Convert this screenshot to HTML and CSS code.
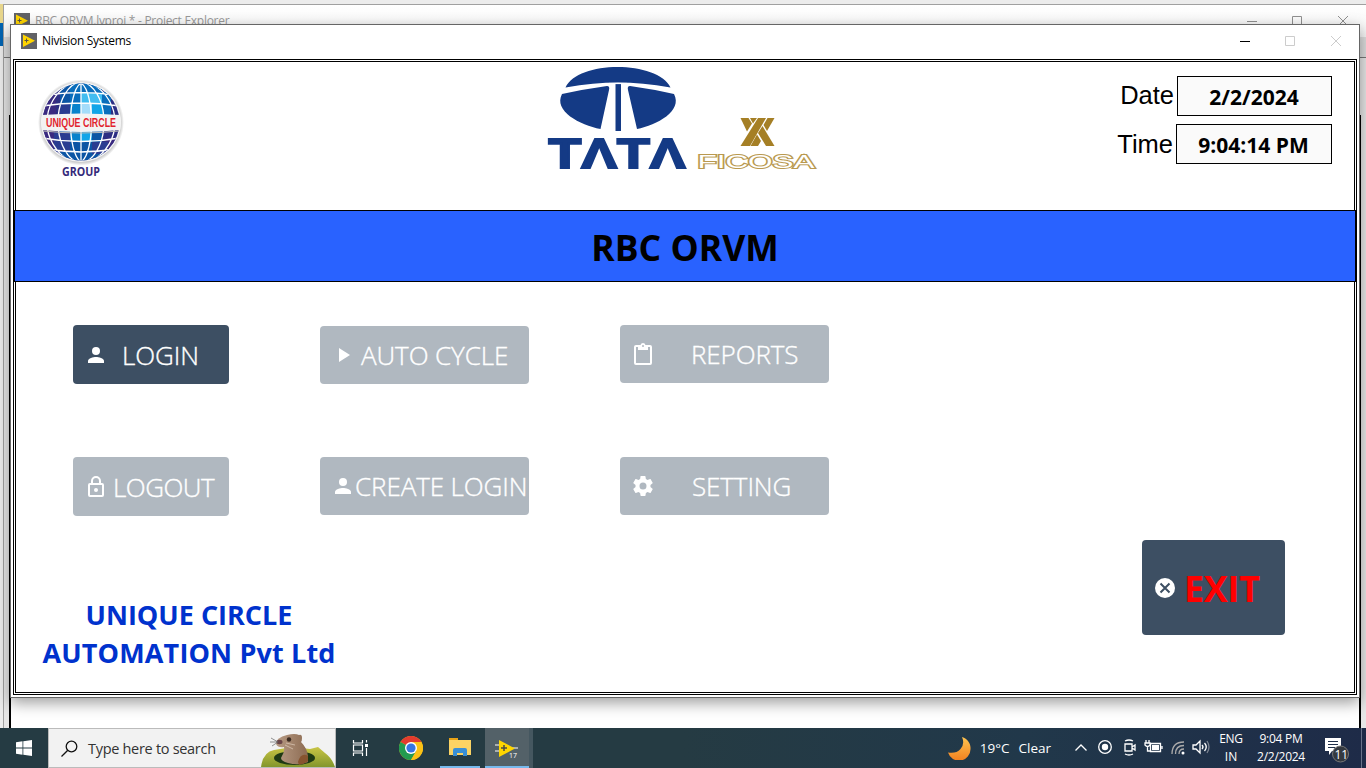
FILE: index.html
```
<!DOCTYPE html>
<html lang="en">
<head>
<meta charset="utf-8">
<title>Nivision Systems</title>
<link rel="stylesheet" href="styles.css">
</head>
<body>
<svg class="defs" width="0" height="0">
  <symbol id="lv" viewBox="0 0 16 16"><path fill="#616266" d="M0 0h16v16H0z"/><path fill="#ffd500" d="M2 1.500l12 6.200L2 14z"/><path stroke="#5c5540" d="M3.500 7.500h4M5.500 5.500v4"/></symbol>
  <symbol id="person" viewBox="0 0 16 16"><circle cx="8" cy="4" r="4" fill="#fff"/><path fill="#fff" d="M0 16v-2c0-2.700 5.300-4 8-4s8 1.300 8 4v2z"/></symbol>
</svg>
<div class="desktop">
  <div class="back-edge"></div>
  <section class="explorer">
    <header class="explorer-title">
      <svg width="16" height="16"><use href="#lv"/></svg>
      <span class="t-explorer">RBC ORVM.lvproj * - Project Explorer</span>
      <svg class="controls" width="104" height="12" fill="none" stroke="#909090"><path d="M1 6.500h10M46.500 1.500h9v10h-9zM92 1l10 10M102 1l-10 10"/></svg>
    </header>
    <div class="toolbar"></div>
    <div class="tree"><div class="tree-inner"></div></div>
  </section>

  <main class="window">
    <header class="titlebar">
      <svg width="16" height="16"><use href="#lv"/></svg>
      <span class="t-title">Nivision Systems</span>
      <svg class="controls" width="104" height="12" fill="none" stroke="#ccc"><path stroke="#000" d="M1 6.500h10"/><path d="M46.500 1.500h9v9h-9zM92 1l10 10M102 1l-10 10"/></svg>
    </header>
    <div class="panel">
      <div class="head">
        <svg class="globe" width="90" height="104" viewBox="36 78 90 104">
          <defs><clipPath id="ball"><circle cx="81" cy="122" r="38.500"/></clipPath>
          <radialGradient id="rim"><stop offset=".9" stop-color="#bbb"/><stop offset="1" stop-color="#fff"/></radialGradient></defs>
          <circle cx="81" cy="122.500" r="43" fill="url(#rim)"/>
          <circle cx="81" cy="122" r="40" fill="#f4f4f4"/>
          <g clip-path="url(#ball)">
            <path fill="#2d2e83" d="M40 80h82v84H40z"/>
            <path fill="#3a2a80" d="M40 80h16v84H40zM106 138h16v26h-16z"/>
            <path fill="#0b55a4" d="M60 80h42v84H60z"/>
            <path fill="#0a6ebc" d="M70 80h12v26H70zM82 80h20v14H82zM102 92h9v24h-9z"/>
            <path fill="#2a3c91" d="M60 104h10v12H60zM54 132h16v20H54zM92 142h16v12H92z"/>
            <path fill="#0883cc" d="M70 104h11v12H70zM70 130h11v11H70z"/>
            <path fill="#42bdf0" d="M81 93h21v10H81z"/><path fill="#a4dcfa" d="M81 103h11v12H81z"/>
            <path fill="#12a5e8" d="M92 103h11v12H92zM81 130h11v12H81z"/>
            <path fill="none" stroke="#fff" stroke-width="1.300" d="M81 82v80M48 95q33-5 66 0M42 106q39-6 78 0M42 138q39 7 78 0M48 149q33 6 66 0M81 83C67 92 67 153 81 162M81 83C95 92 95 153 81 162M76 83C52 96 52 148 76 162M86 83C110 96 110 148 86 162M71 83C39 101 39 143 71 162M91 83C123 101 123 143 91 162"/>
          </g>
          <path fill="#f3f3f3" d="M42 115q39-3 78 0 2 7 0 15-39 4-78 0-2-8 0-15z"/>
          <path fill="none" stroke="#bbb" d="M43 131q38 4 76 0"/>
          <text class="circle-text" x="46" y="127" textLength="70" lengthAdjust="spacingAndGlyphs">UNIQUE CIRCLE</text>
          <text class="group-text" x="62" y="176" textLength="38" lengthAdjust="spacingAndGlyphs">GROUP</text>
        </svg>
        <svg class="brands" width="280" height="116" viewBox="544 64 280 116">
          <g fill="#143a85">
            <path d="M565.500 87.500C572 74 594 67 617.500 67S664 74 670.500 87.500Q642 82.500 618 82.500T565.500 87.500z"/>
            <path d="M562 94Q585 89 607 86q3 0 2 4l-8.500 39C580 125 553 111 562 94z"/>
            <path d="M674 94Q652 89 630 86q-3 0-2 4l9 39C657 125 683 111 674 94z"/>
            <path d="M615.500 84h5.500v47h-5.500z"/>
          </g>
          <path stroke="#fff" stroke-width="1.200" d="M609 83.500h18"/>
          <text class="tata" x="548.500" y="168" textLength="137" lengthAdjust="spacingAndGlyphs">TΛTΛ</text>
          <g fill="#a57f25">
            <path d="M758 118h8l-16 28h-9.500z"/>
            <path d="M740.500 118h8l3.500 5.500-5 8z"/>
            <path d="M750 118h7l-4 5.500z"/>
            <path d="M762.500 126l12 20h-8.500l-8-13z"/>
            <path d="M757 134.500l4 6.500-3 5h-7.500z"/>
            <path d="M767.500 118h7l-7.500 13-3.500-6z"/>
          </g>
          <text class="ficosa" x="697.500" y="168" textLength="117" lengthAdjust="spacingAndGlyphs">FICOSA</text>
        </svg>
        <div class="clock">
          <div class="clock-row"><span class="t-date">Date</span><output class="field date"><span class="t-dv">2/2/2024</span></output></div>
          <div class="clock-row"><span class="t-time">Time</span><output class="field time"><span class="t-tv">9:04:14 PM</span></output></div>
        </div>
      </div>
      <div class="banner"><h1>RBC ORVM</h1></div>
      <div class="actions">
        <button class="btn login"><svg width="16" height="16"><use href="#person"/></svg><span>LOGIN</span></button>
        <button class="btn off auto"><svg width="11" height="14"><path fill="#fff" d="M0 0l11 7-11 7z"/></svg><span>AUTO CYCLE</span></button>
        <button class="btn off reports"><svg width="18" height="22" viewBox="0 0 18 22"><rect x="1" y="3" width="16" height="18" rx="1" fill="none" stroke="#fff" stroke-width="2"/><path fill="#fff" d="M4 2h2.500a2.600 2.600 0 0 1 5 0H14v5H4z"/><circle cx="9" cy="3" r="1" fill="#b0b8c0"/></svg><span>REPORTS</span></button>
        <button class="btn off logout"><svg width="16" height="21" viewBox="0 0 16 21"><rect x="1" y="8" width="14" height="12" rx="1" fill="none" stroke="#fff" stroke-width="2"/><path fill="none" stroke="#fff" stroke-width="2" d="M4 8V5a4 4 0 0 1 8 0v3"/><circle cx="8" cy="14" r="2" fill="#fff"/></svg><span>LOGOUT</span></button>
        <button class="btn off create"><svg width="16" height="16"><use href="#person"/></svg><span>CREATE LOGIN</span></button>
        <button class="btn off setting"><svg width="20" height="20" viewBox="2 2 20 20"><path fill="#fff" d="M19.430 12.980c.04-.32.07-.64.07-.98s-.03-.66-.07-.98l2.110-1.650c.19-.15.24-.42.12-.64l-2-3.460c-.12-.22-.39-.3-.61-.22l-2.490 1c-.52-.4-1.080-.73-1.690-.98l-.38-2.650A.49.49 0 0 0 14 2h-4c-.25 0-.46.18-.49.42l-.38 2.650c-.61.25-1.170.59-1.690.98l-2.490-1c-.23-.09-.49 0-.61.22l-2 3.460c-.13.22-.07.49.12.64l2.110 1.650c-.04.32-.07.65-.07.98s.03.66.07.98l-2.110 1.650c-.19.15-.24.42-.12.64l2 3.460c.12.22.39.3.61.22l2.490-1c.52.4 1.080.73 1.690.98l.38 2.650c.03.24.24.42.49.42h4c.25 0 .46-.18.49-.42l.38-2.650c.61-.25 1.170-.59 1.690-.98l2.490 1c.23.09.49 0 .61-.22l2-3.460c.12-.22.07-.49-.12-.64zM12 15.500a3.500 3.500 0 1 1 0-7 3.500 3.500 0 0 1 0 7z"/></svg><span>SETTING</span></button>
      </div>
      <div class="foot">
        <div class="company"><span class="t-c1">UNIQUE CIRCLE</span><span class="t-c2">AUTOMATION Pvt Ltd</span></div>
        <button class="btn exit"><svg width="20" height="20"><circle cx="10" cy="10" r="10" fill="#fff"/><path stroke="#3d4f63" stroke-width="2" d="M5.500 5.500l9 9M14.500 5.500l-9 9"/></svg><span>EXIT</span></button>
      </div>
    </div>
  </main>

  <footer class="taskbar">
    <div class="start"><svg width="16" height="16" fill="#fff"><path d="M0 2.300L6.500 1.300v6.300H0zM7.300 1.200L16 0v7.600H7.300zM0 8.400h6.500v6.300L0 13.800zM7.300 8.400H16V16l-8.700-1.200z"/></svg></div>
    <div class="search">
      <svg width="17" height="17" fill="none" stroke="#111" stroke-width="1.300"><circle cx="10.500" cy="6.500" r="5.300"/><path d="M6.800 10.300L.5 16.500"/></svg>
      <span class="t-search">Type here to search</span>
      <svg class="gopher" width="74" height="33" viewBox="0 0 74 33">
        <defs><linearGradient id="fur"><stop stop-color="#b79a83"/><stop offset="1" stop-color="#8c6b52"/></linearGradient>
        <linearGradient id="hill" x2="0" y2="1"><stop stop-color="#c9c545"/><stop offset="1" stop-color="#83962c"/></linearGradient></defs>
        <path fill="url(#hill)" d="M0 33q2-15 13-17l18-3 18 2 8-2 7 6q7 5 10 14z"/>
        <ellipse cx="33.500" cy="24" rx="20.500" ry="7" fill="#1e3914"/>
        <path fill="url(#fur)" d="M17 5q4-3 9-4 8-2 12 0 3-1 3 3 0 3-1 4 6 6 7 14v6q-9 4-20 1-7-2-7-5 4-6 3-11-6 1-8-3z"/>
        <path fill="#87542f" d="M47 22q-7-4-10 6l1 3q6-1 9-4z"/>
        <ellipse cx="18.500" cy="8" rx="3" ry="2.200" fill="#6b4648"/><circle cx="28" cy="5.500" r="2.200" fill="#3a2a20"/><path fill="none" stroke="#666" stroke-width=".7" d="M10 4l7 4M9 8h8M11 12l6-4"/><path fill="none" stroke="#e0cdbc" stroke-width=".7" d="M25 9l9 2M24 11l8 4"/>
      </svg>
    </div>
    <div class="task"><svg width="18" height="16" fill="none" stroke="#fff" stroke-width="1.200"><path d="M1.500 0v3h9V0M1.500 16v-3h9v3M1.500 5h9v6h-9zM14.500 0v2.500M14.500 8v8"/><path fill="#fff" stroke="none" d="M13 4h3v3h-3z"/></svg></div>
    <div class="task"><svg width="24" height="24" viewBox="0 0 24 24"><circle cx="12" cy="12" r="12" fill="#fbc116"/><path fill="#e33b2e" d="M12 12L1.600 6A12 12 0 0 1 22.400 6z"/><path fill="#229b50" d="M12 12L1.600 6A12 12 0 0 0 12 24l5.200-9z"/><path fill="#fbc116" d="M12 6h10.400A12 12 0 0 1 12 24l5.200-9z"/><circle cx="12" cy="12" r="6" fill="#fff"/><circle cx="12" cy="12" r="4.600" fill="#3775e2"/></svg></div>
    <div class="task open"><svg width="22" height="18"><path fill="#e8a317" d="M0 0h9v4H0z"/><path fill="#fbd364" d="M0 2h22v15H0z"/><path fill="#398fd5" d="M4 18v-6q0-2 2-2h10q2 0 2 2v6h-4v-3H8v3z"/></svg></div>
    <div class="task active"><svg width="26" height="22"><path stroke="#c9c9c9" stroke-width="1.500" d="M1 8h5M1 14h5M18 11h6"/><path fill="#ffd500" d="M5 3l16 8.500L5 20z"/><path stroke="#4c4b45" stroke-width="1.500" d="M7 11h6M10 8v6"/><text class="ver" x="15" y="21">17</text></svg></div>
    <div class="tray">
      <svg class="moon" width="23" height="23"><defs><linearGradient id="mg" x2="0" y2="1"><stop stop-color="#ffc450"/><stop offset="1" stop-color="#f2801f"/></linearGradient></defs><path fill="url(#mg)" d="M14 0C20 2 23 7 22.500 12A11.500 11.500 0 0 1 0 15.500Q8 17 12.500 12T14 0z"/></svg>
      <span class="t-temp">19°C</span><span class="t-clear">Clear</span>
      <svg class="icons" width="140" height="18" viewBox="1074 740 140 18" fill="none" stroke="#fff" stroke-width="1.300">
        <path d="M1075.500 751.500l5.500-5.500 5.500 5.500"/>
        <circle cx="1105" cy="748" r="6.300"/><circle cx="1105" cy="748" r="3.200" fill="#fff" stroke="none"/>
        <path d="M1125 745h7v7h-7zM1132 748l3-2v5l-3-2M1125 742q4-2 8 0M1125 755q4 2 8 0"/>
        <path d="M1150.500 744.500h10v8h-10zM1162 747v3M1146 741v3M1149 741v3M1145 744h5v2q-2.500 3-5 0zM1147.500 748v4h3"/><path fill="#fff" stroke="none" d="M1152 746h7v5h-7z"/>
        <path stroke="#aaa" d="M1172 755q0-12 12-12M1175.500 755q0-8.500 8.500-8.500M1179 755q0-5 5-5"/><circle cx="1183" cy="754" r="1.500" fill="#fff" stroke="none"/>
        <path d="M1193 746h3l4-4v12l-4-4h-3zM1202 746q2 2 0 4M1204.500 744q3.500 4 0 8"/><path stroke="#7c8492" d="M1207 742q4 6 0 12"/>
      </svg>
      <div class="lang"><span class="t-eng">ENG</span><span class="t-in">IN</span></div>
      <div class="when"><span class="t-t">9:04 PM</span><span class="t-d">2/2/2024</span></div>
      <svg class="notify" width="26" height="25"><path fill="#fff" d="M0 0h16v13H7l-3 4v-4H0z"/><path stroke="#20304a" d="M3 3.500h10M3 6.500h10M3 9.500h7"/><circle cx="15.500" cy="16" r="8" fill="#343940" stroke="#777"/><text class="count" x="9.500" y="20.500">11</text></svg>
      <div class="peek"></div>
    </div>
  </footer>
</div>
</body>
</html>
```

FILE: styles.css
```
* { box-sizing: border-box; }
body { margin: 0; font-family: "Open Sans", "Noto Sans", sans-serif; }
svg { display: block; flex: none; }
span, h1 { white-space: nowrap; }
.defs { position: absolute; }
.desktop { position: relative; width: 1366px; height: 768px; overflow: hidden; background: #ececec; }
.back-edge { position: absolute; left: 0; top: 4px; width: 4px; height: 42px; border-top: 19px solid #e7d58b; background: #0063b1; }

.explorer { position: absolute; left: 3px; top: 4px; width: 1380px; height: 730px; border: 1px solid #a0a0a0; background: #e6e6e6; }
.explorer-title { display: flex; align-items: center; gap: 5px; height: 32px; padding: 0 32px 0 10px; background: linear-gradient(#fff, #f4f4f4); }
.controls { margin-left: auto; }
.t-explorer { font-size: 12px; line-height: 16px; color: #999; letter-spacing: -.28px; }
.toolbar { height: 21px; border-bottom: 1px solid #777; background: #ddd; }
.tree { height: 675px; padding: 57px 21px 0 5px; }
.tree-inner { height: 100%; border: solid #000; border-width: 0 2px; background: #fff; }

.window { position: absolute; left: 10px; top: 24px; width: 1350px; height: 674px; border: 1px solid #666; background: #fff; box-shadow: 0 5px 14px rgba(0,0,0,.38); }
.titlebar { display: flex; align-items: center; gap: 5px; height: 34px; padding: 0 16px 3px 10px; }
.t-title { font-size: 12px; line-height: 16px; letter-spacing: -.3px; }
.panel { width: 1344px; height: 636px; margin-left: 2px; border: 3px double #000; background: #fff; }

.head { display: flex; align-items: flex-start; height: 148px; }
.globe { margin: 16px 0 0 20px; overflow: visible; }
.circle-text { font: bold 12.5px "Liberation Sans", sans-serif; fill: #e1232d; }
.group-text { font: bold 12px "Open Sans", sans-serif; fill: #352a7a; }
.brands { margin: 2px 0 0 418px; overflow: visible; }
.tata { font: bold 43px "Liberation Sans", sans-serif; fill: #143a85; stroke: #143a85; stroke-width: 2px; }
.ficosa { font: 17.5px "Liberation Sans", sans-serif; fill: #fff; stroke: #b9994f; stroke-width: 2px; paint-order: stroke; }
.clock { display: grid; gap: 8px; margin: 14px 22px 0 auto; }
.clock-row { display: flex; justify-content: flex-end; gap: 3px; height: 40px; font: 25.5px/38px "Liberation Sans", sans-serif; }
.clock-row + .clock-row { line-height: 40px; }
.field { display: flex; align-items: center; justify-content: center; width: 155px; height: 40px; border: 1px solid #000; background: #fafafa; font: bold 21px/24px "Open Sans", sans-serif; }
.field.time { width: 156px; }
.t-dv, .t-tv { margin: 1px 1px 0 0; }

.banner { display: flex; align-items: center; justify-content: center; height: 72px; margin: 0 -2px; border: 1px solid #000; background: #2962ff; }
.banner h1 { margin: 1px 0 0; font-size: 35.500px; line-height: 48px; font-weight: 700; }

.actions { display: grid; grid-template-columns: 156px 209px 209px; grid-template-rows: 59px 59px; gap: 73px 91px; padding: 43px 0 0 57px; }
.btn { display: flex; align-items: center; height: 59px; margin: 0; padding: 0 0 0 15px; border: 0; border-radius: 4px; background: #3d4f63; color: #fff; font: 300 26px/36px "Open Sans", sans-serif; letter-spacing: -.1px; -webkit-text-stroke: .35px currentColor; }
.btn.off { background: #b0b8c0; }
.btn span { margin-top: 1px; }
.btn.auto span, .btn.reports span, .btn.create span, .btn.setting span { margin-top: -1px; }
.login { gap: 18px; }
.auto { height: 58px; margin-top: 1px; padding-left: 19px; gap: 11px; }
.reports { height: 58px; padding-left: 14px; gap: 39px; }
.logout { gap: 9px; letter-spacing: -.5px; }
.create { height: 58px; gap: 4px; }
.setting { height: 58px; padding-left: 13px; gap: 39px; }

.foot { display: flex; justify-content: space-between; padding: 24px 69px 0 25px; }
.company { display: flex; flex-direction: column; align-items: center; width: 296px; margin-top: 56px; color: #0032cd; font-size: 27px; line-height: 38px; font-weight: 700; }
.t-c2 { letter-spacing: .15px; }
.exit { width: 143px; height: 95px; padding-left: 13px; gap: 9px; color: #f00; font-weight: 700; font-size: 36px; letter-spacing: -.3px; -webkit-text-stroke: 0; }
.exit span { margin-top: 3px; }

.taskbar { position: absolute; left: 0; top: 728px; width: 1366px; height: 40px; display: flex; background: linear-gradient(90deg, #253b43 0 50%, #21384a 75%, #1e2b48); color: #fff; font-size: 12px; }
.start { width: 48px; padding: 12px 16px; }
.search { display: flex; align-items: center; width: 288px; height: 40px; padding-left: 12px; gap: 10px; border: 1px solid #bbb; background: #f2f2f2; color: #333; font-size: 14.5px; }
.t-search { letter-spacing: -.3px; }
.gopher { align-self: flex-end; margin-left: auto; }
.task { display: flex; align-items: center; justify-content: center; width: 50px; height: 40px; }
.open { width: 40px; margin: 0 5px 0 4px; border-bottom: 2px solid #76b9ed; }
.active { width: 48px; border-right: 4px solid #455760; background: #536168; box-shadow: inset 0 -2px #76b9ed; }
.ver { font: 7px "Open Sans", sans-serif; fill: #fff; }
.tray { display: flex; align-items: center; margin-left: auto; padding-right: 4px; }
.t-temp { margin-left: 9px; font-size: 13.5px; }
.t-clear { margin-left: 9px; font-size: 13.5px; }
.icons { margin-left: 23px; }
.lang, .when { display: flex; flex-direction: column; align-items: center; line-height: 18px; }
.lang { width: 34px; }
.t-eng, .t-t, .t-d { letter-spacing: -.25px; }
.when { width: 50px; margin-left: 8px; }
.notify { margin: 4px 0 0 19px; }
.count { font: 12px "Open Sans", sans-serif; fill: #fff; }
.peek { width: 1px; height: 40px; margin-left: 10px; background: #69738a; }
```
